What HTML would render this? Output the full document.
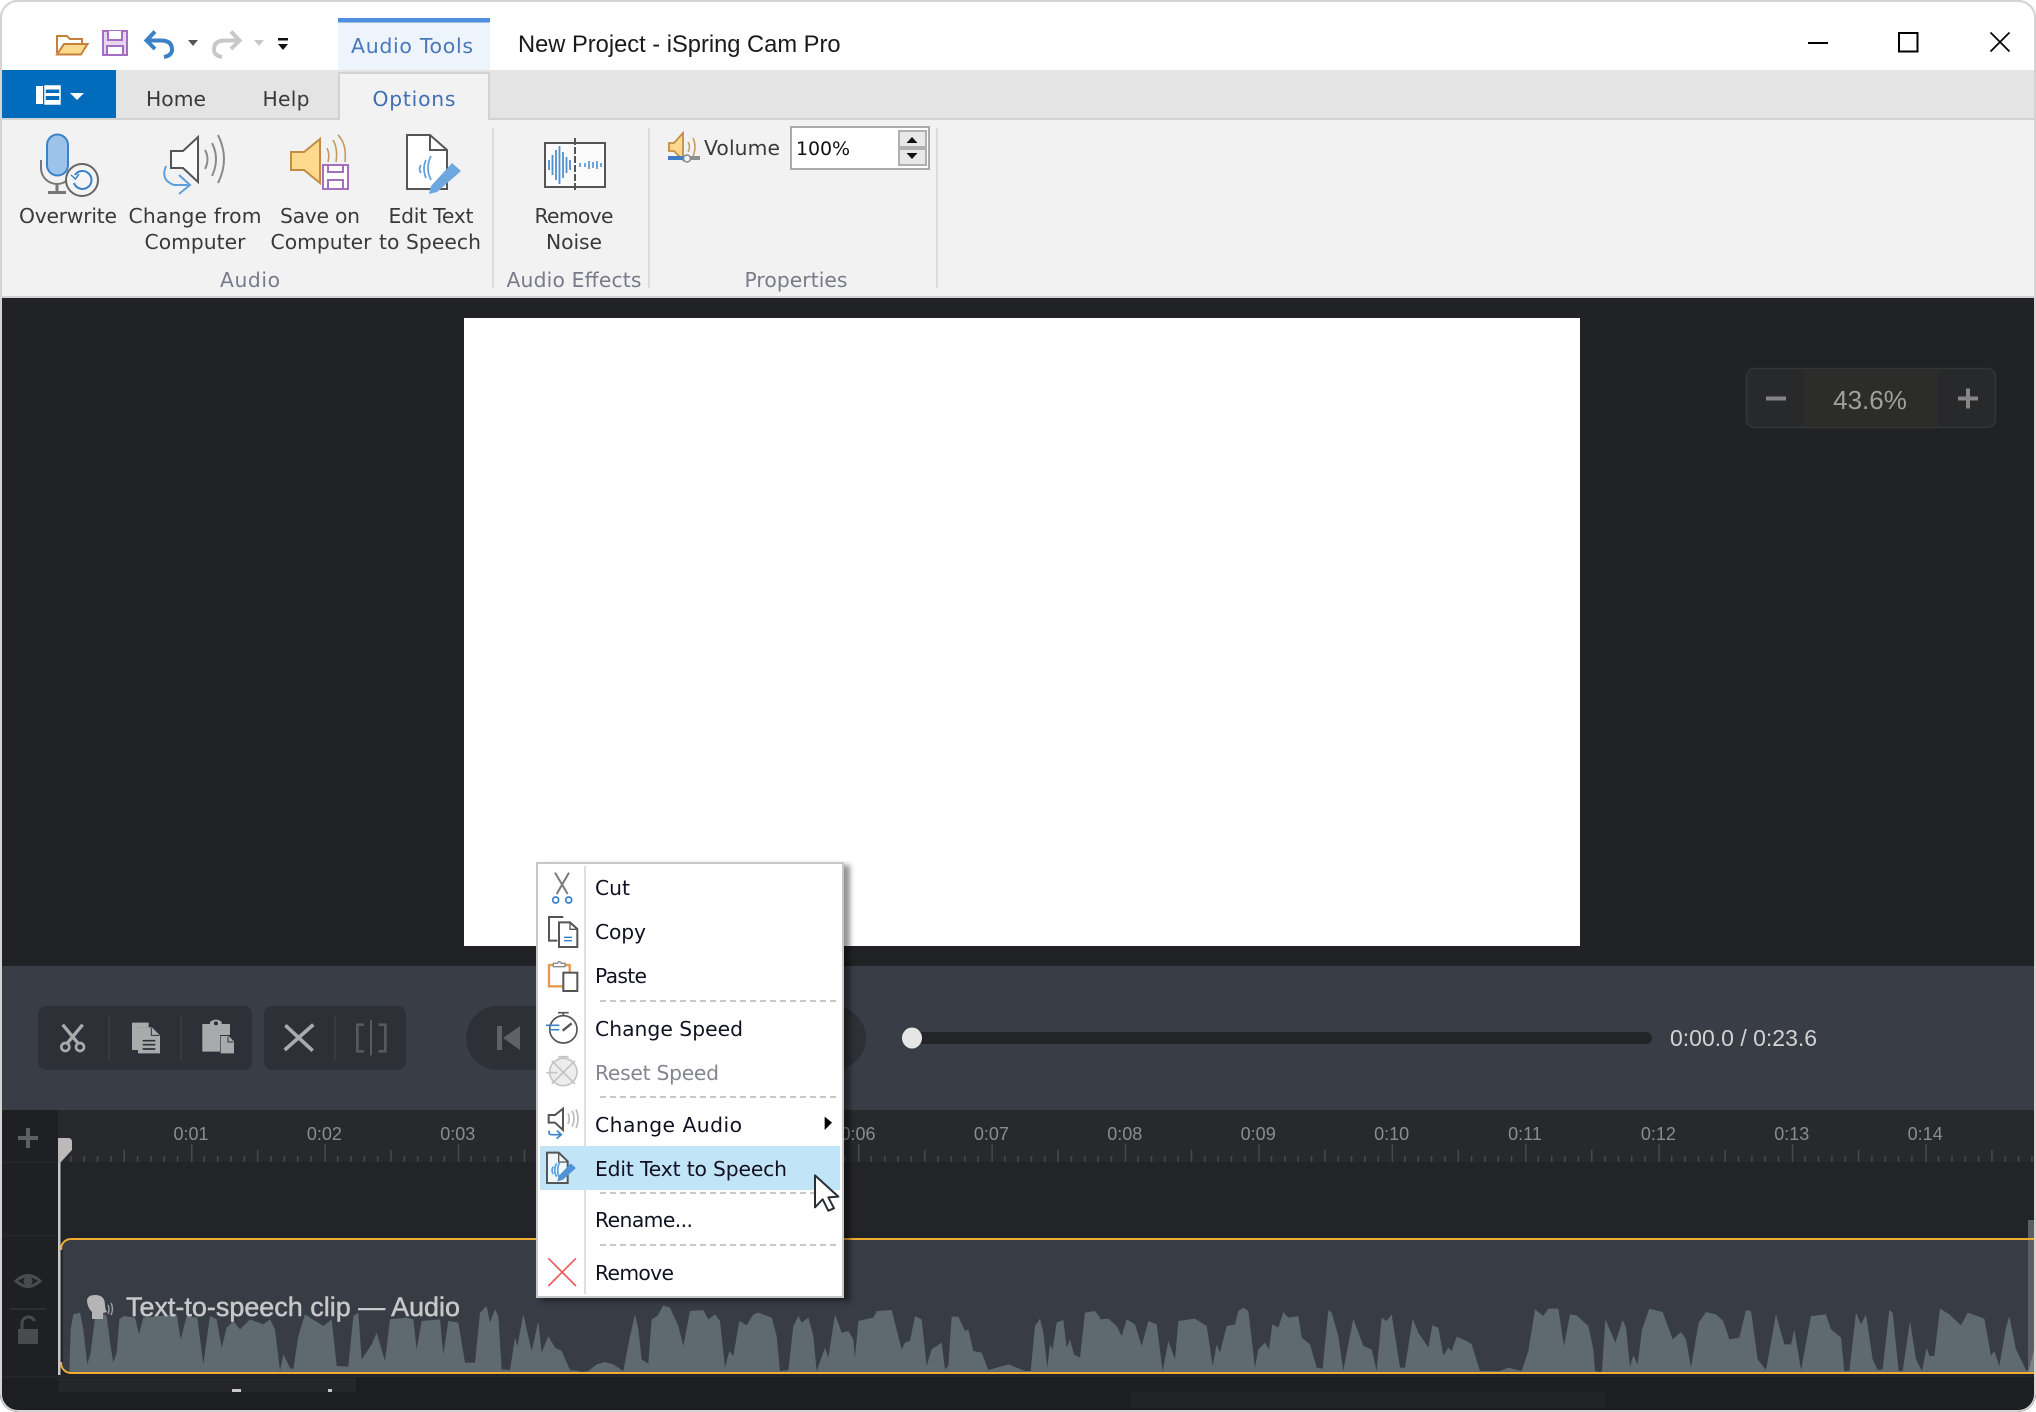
<!DOCTYPE html>
<html lang="en"><head><meta charset="utf-8"><title>New Project - iSpring Cam Pro</title>
<style>
html,body{margin:0;padding:0;background:#fff;width:2036px;height:1412px;overflow:hidden}
#win{position:absolute;left:0;top:0;width:2036px;height:1412px;border-radius:18px;overflow:hidden;background:#202226}
#win svg{position:absolute;left:0;top:0}
#frame{position:absolute;left:0;top:0;width:2032px;height:1408px;border:2px solid #d4d4d4;border-radius:18px;pointer-events:none}
#menu{position:absolute;left:536px;top:862px;width:304px;height:432px;background:#fff;border:2px solid #c6c6c6;box-shadow:6px 3px 5px rgba(0,0,0,.42)}
text{font-family:"DejaVu Sans","Liberation Sans",sans-serif;font-size:20.3px;fill:#3a3a3a}
.m{text-anchor:middle}
.l{font-family:"Liberation Sans",sans-serif}
.g{fill:#7a7a8a}
.mi{font-size:20.3px;fill:#111122}
.r{font-family:"Liberation Sans",sans-serif;font-size:18px;fill:#8c8c8c;text-anchor:middle}
</style></head><body>
<div id="win">
<svg width="2036" height="1412" viewBox="0 0 2036 1412">
<defs>
<pattern id="tk" patternUnits="userSpaceOnUse" x="57.6" y="1110" width="133.4" height="52">
<g stroke="#47494d" stroke-width="1.5">
<path d="M.7 34V52M13.3 46V52M26.7 46V52M40 46V52M53.4 46V52M66.7 40V52M80 46V52M93.4 46V52M106.7 46V52M120 46V52"/>
</g></pattern>
</defs>
<!-- title bar -->
<rect width="2036" height="70" fill="#fff"/>
<rect x="338" y="18" width="152" height="54" fill="#eef4fc"/>
<rect x="338" y="18" width="152" height="4.5" fill="#4f8ee0"/>
<text class="m" x="412" y="53" textLength="122" style="font-size:20.5px;fill:#4a78b8">Audio Tools</text>
<text class="l" x="518" y="52" style="font-size:23.7px;fill:#1a1a1a">New Project - iSpring Cam Pro</text>
<!-- quick access -->
<path d="M57 53V36h10l3 3h12v6" fill="#fff" stroke="#c5813c" stroke-width="2"/>
<path d="M57 54.5L64 44H87.5L81 54.5Z" fill="#fdd98e" stroke="#c5813c" stroke-width="2"/>
<rect x="103" y="31" width="24" height="24" fill="#e6d6f0" stroke="#a46fc2" stroke-width="2"/>
<path d="M108 31v9h14v-9M107 54v-8h16v8" fill="#fff" stroke="#a46fc2" stroke-width="2"/>
<path d="M155 31.5L146.5 40.5L155 49M147 40.5H161q11 0 11 9q0 6-8 7.5" fill="none" stroke="#3a82c8" stroke-width="4"/>
<path d="M188 40h10l-5 6z" fill="#555"/>
<path d="M231 31.5L239.5 40.5L231 49M239 40.5H225q-11 0-11 9q0 6 8 7.5" fill="none" stroke="#c8c8c8" stroke-width="4"/>
<path d="M254 40h10l-5 6z" fill="#c8c8c8"/>
<path d="M278 38h10v2.5h-10zM278 44h10l-5 6z" fill="#111"/>
<!-- window controls -->
<rect x="1808" y="42" width="20" height="2" fill="#000"/>
<rect x="1899" y="33" width="18.5" height="18.5" fill="none" stroke="#000" stroke-width="2"/>
<path d="M1990.5 32.5L2009.5 51.5M2009.5 32.5L1990.5 51.5" stroke="#000" stroke-width="1.7"/>
<!-- tab row -->
<rect y="70" width="2036" height="48" fill="#e4e4e4"/>
<rect y="118" width="2036" height="2" fill="#d2d2d2"/>
<rect x="2" y="70" width="114" height="48" fill="#006cbb"/>
<path d="M36 86h7v18h-7zM45 86h15v3.5H45zM45 93h15v3H45zM45 100h15v4H45z" fill="#fff"/>
<path d="M45 86h15v18H45z" fill="none" stroke="#fff" stroke-width="1.5"/>
<path d="M70 93h14l-7 7z" fill="#fff"/>
<text class="m" x="176" y="106">Home</text>
<text class="m" x="286" y="106" textLength="47">Help</text>
<path d="M339 120V73H489V120" fill="#f2f2f2" stroke="#d2d2d2" stroke-width="2"/>
<rect x="340" y="117" width="148" height="4" fill="#f2f2f2"/>
<text class="m" x="414" y="106" textLength="83" style="fill:#3f6fb5">Options</text>
<!-- ribbon -->
<rect y="120" width="2036" height="176" fill="#f2f2f2"/>
<rect y="296" width="2036" height="2" fill="#d2d2d2"/>
<path d="M493 128V288M649 128V288M937 128V288" stroke="#dcdcdc" stroke-width="2"/>
<!-- Overwrite icon -->
<path d="M41 160v8a16 16 0 0 0 32 0" fill="none" stroke="#777" stroke-width="2"/>
<path d="M57 184v8M48 192.5h18" stroke="#777" stroke-width="3"/>
<rect x="47" y="134.5" width="21" height="41" rx="10.5" fill="#9cc4ea" stroke="#3a82c8" stroke-width="2"/>
<circle cx="82" cy="180" r="16" fill="#f4f4f4" stroke="#666" stroke-width="2"/>
<path d="M75 175a9 9 0 1 1-1 8" fill="none" stroke="#3a82c8" stroke-width="2"/>
<path d="M71 175l4.5 4 3.5-5" fill="none" stroke="#3a82c8" stroke-width="1.5"/>
<!-- Change from icon -->
<path d="M171 151h12L198 137V182L183 168H171Z" fill="#fafafa" stroke="#555" stroke-width="2"/>
<path d="M205 150q5 9 0 19M212 143q8 16 0 33M218 135q12 24 0 48" fill="none" stroke="#8a8a8a" stroke-width="2"/>
<path d="M166 166q-6 14 8 19h14M179 175l11 10-11 9" fill="none" stroke="#5ca0dc" stroke-width="2"/>
<!-- Save icon -->
<path d="M291 152h13L320 139V183L304 170H291Z" fill="#fdd98e" stroke="#c48d45" stroke-width="2"/>
<path d="M328 162q2-8-1-14M336 162q2-14-3-22M345 162q2-18-7-27" fill="none" stroke="#c49a60" stroke-width="1.6"/>
<rect x="323" y="165" width="25" height="24" fill="#fff" stroke="#a46fc2" stroke-width="2"/>
<path d="M328 165v7h15v-7M328 189v-9h15v9" fill="none" stroke="#a46fc2" stroke-width="2"/>
<!-- Edit text icon -->
<path d="M407 135H430L447 150V189H407Z" fill="#fff" stroke="#555" stroke-width="2"/>
<path d="M430 135V150H447" fill="none" stroke="#555" stroke-width="2"/>
<path d="M421 165q-3 4 0 8M426 160q-4 8 0 18M431 156q-6 12 0 24" fill="none" stroke="#5ca0dc" stroke-width="1.7"/>
<path d="M452 163L461 171L437 192L429 194L431 186Z" fill="#6ea7e0"/>
<!-- Noise icon -->
<rect x="545" y="143" width="60" height="44" fill="#fbfbfb" stroke="#555" stroke-width="2"/>
<path d="M575 138V192" stroke="#555" stroke-width="2" stroke-dasharray="7 2"/>
<path d="M549 160v10M552.5 155v20M556 150v30M559.5 146v38M563 152v26M566.5 157v16M570 160v10" stroke="#4f90d0" stroke-width="1.8"/>
<path d="M580 163v4M585 163v4M589 161v8M593 162v6M597 161v8M601 163v4" stroke="#4f90d0" stroke-width="1.6"/>
<!-- ribbon labels -->
<text class="m" x="68" y="223" textLength="98">Overwrite</text>
<text class="m" x="195" y="223" textLength="133">Change from</text>
<text class="m" x="195" y="249" textLength="101">Computer</text>
<text class="m" x="320" y="223" textLength="80">Save on</text>
<text class="m" x="321" y="249" textLength="101">Computer</text>
<text class="m" x="431" y="223" textLength="85">Edit Text</text>
<text class="m" x="430" y="249" textLength="102">to Speech</text>
<text class="m" x="574" y="223" textLength="79">Remove</text>
<text class="m" x="574" y="249" textLength="56">Noise</text>
<text class="m g" x="250" y="287" textLength="60">Audio</text>
<text class="m g" x="574" y="287" textLength="135">Audio Effects</text>
<text class="m g" x="796" y="287" textLength="103">Properties</text>
<!-- Volume -->
<path d="M669 143h5l9-10v27l-9-9h-5Z" fill="#fdd98e" stroke="#c48d45" stroke-width="1.8"/>
<path d="M688 142q3 5 0 10M693 138q4 9 0 18" fill="none" stroke="#c49a60" stroke-width="1.5"/>
<rect x="668" y="156" width="18" height="4" fill="#3d7fc4"/>
<rect x="686" y="156" width="14" height="4" fill="#8e8e8e"/>
<circle cx="687" cy="158.5" r="3.5" fill="#f2f2f2" stroke="#888" stroke-width="1.5"/>
<text x="704" y="155" textLength="76">Volume</text>
<rect x="791" y="127" width="138" height="42" fill="#fff" stroke="#ababab" stroke-width="2"/>
<text x="796" y="155" textLength="54" style="font-size:19px;fill:#111">100%</text>
<rect x="899" y="131" width="27" height="16" fill="#e8e8e8" stroke="#b0b0b0" stroke-width="2"/>
<rect x="899" y="149" width="27" height="16" fill="#e8e8e8" stroke="#b0b0b0" stroke-width="2"/>
<path d="M906.5 143h11l-5.5-6zM906.5 153h11l-5.500 6z" fill="#111"/>
<!-- canvas -->
<rect x="464" y="318" width="1116" height="628" fill="#fff"/>
<!-- zoom box -->
<rect x="1746.5" y="368.5" width="249" height="59" rx="8" fill="#28292b" stroke="#333539" stroke-width="1.5"/>
<rect x="1804" y="369" width="134" height="58" fill="#2c2c2a"/>
<rect x="1766" y="396.5" width="20" height="4" fill="#858585"/>
<path d="M1958 396.5h8v-8h4v8h8v4h-8v8h-4v-8h-8z" fill="#858585"/>
<text class="l m" x="1870" y="409" style="font-size:26px;fill:#a0a0a0">43.6%</text>
<!-- toolbar -->
<rect y="966" width="2036" height="144" fill="#393e46"/>
<rect x="38" y="1006" width="214" height="64" rx="8" fill="#2d3137"/>
<rect x="264" y="1006" width="142" height="64" rx="8" fill="#2d3137"/>
<rect x="466" y="1006" width="400" height="64" rx="32" fill="#2d3137"/>
<path d="M109 1016v44M181 1016v44M335 1016v44" stroke="#3b3f45" stroke-width="1.5"/>
<g transform="translate(30,1000) scale(.33333)">
<g fill="none" stroke="#a9aaac">
<path d="M98 74L146 132M158 74L110 132" stroke-width="10"/>
<circle cx="106" cy="141" r="12" stroke-width="8"/><circle cx="150" cy="141" r="12" stroke-width="8"/>
</g>
<path d="M306 68h50v14H324v68H306z" fill="#a9aaac"/>
<path d="M324 82H366L390 106V160H324Z" fill="#a9aaac"/>
<path d="M364 84v22h24" fill="none" stroke="#2d3137" stroke-width="3"/>
<path d="M338 122h38M338 134h38M338 147h38" stroke="#2d3137" stroke-width="5"/>
<path d="M517 72H540V66Q558 52 575 66V72H600V105H570V155H517Z" fill="#a9aaac"/>
<circle cx="558" cy="70" r="6" fill="#2d3137"/>
<path d="M572 108H596L612 124V160H572Z" fill="#a9aaac"/>
<path d="M594 110v16h16" fill="none" stroke="#2d3137" stroke-width="3"/>
<path d="M766 76L848 152M850 74L764 150" stroke="#a9aaac" stroke-width="11"/>
<path d="M1002 74H982V154H1002M1046 74H1066V154H1046" fill="none" stroke="#565a5f" stroke-width="8"/>
<path d="M1023 60V166" stroke="#85888b" stroke-width="3"/>
</g>
<path d="M497 1026h5v24h-5zM520 1026v24l-17-12z" fill="#5e6165"/>
<rect x="909" y="1032" width="743" height="12" rx="6" fill="#222428"/>
<ellipse cx="912" cy="1038" rx="10" ry="10.5" fill="#e6e6e6"/>
<text class="l" x="1670" y="1046" style="font-size:23px;fill:#d2d2d2">0:00.0 / 0:23.6</text>
<!-- timeline -->
<rect y="1110" width="2036" height="302" fill="#1d1e21"/>
<rect x="58" y="1110" width="1978" height="52" fill="#27292d"/>
<rect x="58" y="1110" width="1978" height="52" fill="url(#tk)"/>
<rect x="58" y="1162" width="1978" height="74" fill="#222428"/>
<rect x="58" y="1236" width="1978" height="140" fill="#212327"/>
<rect x="2" y="1110" width="56" height="270" fill="#1e2024"/>
<path d="M2 1162.5H58M2 1235.5H58M2 1376.5H2036" stroke="#26282b" stroke-width="1.5"/>
<path d="M10 1309H46" stroke="#303236" stroke-width="1.5"/>
<path d="M18 1136h8v-8h4v8h8v4h-8v8h-4v-8h-8z" fill="#5d5f62"/>
<path d="M16 1281q12-11 24 0q-12 11-24 0z" fill="none" stroke="#484a4e" stroke-width="3"/>
<circle cx="28" cy="1281" r="4.5" fill="#484a4e"/>
<path d="M18 1329h20v15H18z" fill="#484a4e"/>
<path d="M22 1329v-6a6.5 6.5 0 0 1 12.5-2" fill="none" stroke="#484a4e" stroke-width="3"/>
<rect x="58" y="1378" width="298" height="14" fill="#24262a"/>
<rect x="1130" y="1392" width="475" height="16" fill="#212327"/>
<path d="M232 1389h9v3h-9zM328 1389h4v3h-4z" fill="#c8c8c8"/>
<text class="r" x="191" y="1140">0:01</text>
<text class="r" x="324.4" y="1140">0:02</text>
<text class="r" x="457.8" y="1140">0:03</text>
<text class="r" x="858" y="1140">0:06</text>
<text class="r" x="991.4" y="1140">0:07</text>
<text class="r" x="1124.8" y="1140">0:08</text>
<text class="r" x="1258.2" y="1140">0:09</text>
<text class="r" x="1391.6" y="1140">0:10</text>
<text class="r" x="1525" y="1140">0:11</text>
<text class="r" x="1658.4" y="1140">0:12</text>
<text class="r" x="1791.8" y="1140">0:13</text>
<text class="r" x="1925.2" y="1140">0:14</text>
<!-- clip -->
<rect x="60" y="1239" width="2000" height="134" rx="10" fill="#383c44"/>
<rect x="2028" y="1220" width="6" height="153" fill="#5c5f62"/>
<path d="M2034 1350v23h-6z" fill="#7c8488"/>
<g fill="#5e6a6f">
<g transform="translate(60,1296) scale(.33333)"><polygon points="28,228 32,100 40,55 60,50 70,100 82,205 92,170 105,65 125,50 140,60 150,140 160,200 170,170 178,70 190,60 225,65 237,115 250,65 350,55 362,130 380,60 412,65 430,205 440,130 450,60 470,70 485,155 500,95 520,75 540,100 570,70 610,85 630,70 645,100 660,225 670,175 690,215 700,220 715,120 735,55 790,90 815,70 830,210 865,212 880,60 895,50 905,190 935,145 950,110 975,195 990,70 1040,65 1060,70 1070,160 1085,75 1140,70 1150,175 1165,75 1195,80 1215,200 1245,200 1260,50 1280,30 1290,80 1305,40 1315,60 1325,220 1350,222 1365,125 1372,150 1390,55 1415,165 1435,75 1445,170 1465,120 1485,155 1505,165 1530,222 1560,225 1560,228"/></g>
<g transform="translate(580,1296) scale(.33333)"><polygon points="0,228 25,225 50,205 75,198 100,205 130,225 150,120 165,55 175,100 185,190 205,203 215,70 232,60 250,28 270,35 295,90 310,150 330,45 370,42 385,70 405,55 420,75 435,215 448,165 460,180 478,75 500,88 520,55 535,50 575,65 590,120 600,225 625,222 640,90 655,60 665,80 685,65 700,120 710,225 735,155 745,185 765,55 785,110 805,105 820,130 825,185 835,75 880,65 890,45 935,42 965,160 975,140 990,135 1005,60 1025,70 1040,210 1055,160 1085,140 1095,220 1105,210 1115,62 1135,62 1155,105 1165,100 1180,165 1205,170 1225,222 1285,205 1335,225 1352,225 1365,90 1380,68 1390,110 1402,215 1410,145 1418,160 1430,80 1450,72 1460,155 1470,130 1482,175 1500,185 1515,50 1545,45 1560,65 1560,228"/></g>
<g transform="translate(1100,1296) scale(.33333)"><polygon points="0,228 0,70 25,68 50,90 65,120 80,70 105,85 125,150 145,75 170,85 188,225 205,135 225,190 235,75 285,68 320,90 338,210 350,145 360,170 380,90 405,85 415,45 430,35 445,45 465,215 475,160 495,140 507,160 517,85 535,95 550,48 565,65 595,60 605,125 630,145 650,215 668,218 685,42 695,50 715,120 730,225 740,170 760,68 790,150 815,160 830,225 845,65 860,75 875,55 900,215 915,215 938,68 955,110 985,155 997,88 1015,95 1030,178 1045,155 1055,165 1070,122 1100,135 1115,145 1140,225 1200,225 1225,215 1265,225 1285,165 1305,40 1330,60 1345,38 1375,38 1392,150 1410,55 1430,58 1465,90 1480,160 1485,225 1500,228"/></g>
<g transform="translate(1516,1296) scale(.33333)"><polygon points="252,228 258,225 268,70 298,140 320,72 330,95 342,212 352,178 365,205 378,100 400,38 440,48 470,130 495,108 510,130 525,215 548,80 570,48 600,55 622,75 640,130 670,125 690,42 705,45 725,190 750,222 780,55 805,145 825,145 835,100 855,222 885,60 930,55 945,100 975,125 985,225 1000,225 1020,50 1035,85 1050,55 1070,190 1085,222 1100,220 1120,42 1130,50 1148,225 1160,225 1182,75 1200,190 1218,225 1232,155 1240,180 1255,180 1272,38 1300,55 1335,88 1355,50 1405,68 1425,180 1435,165 1450,210 1470,95 1480,60 1500,160 1530,222 1536,225 1536,228"/></g>
</g>
<rect x="61" y="1239" width="2000" height="134" rx="10" fill="none" stroke="#f0ad32" stroke-width="2"/>
<rect x="60" y="1250" width="3" height="112" fill="#25272b"/>
<path d="M87 1300q1-5 8-5q10 0 10 10q0 4 2 7l-4 1v6h-11v-7q-5-5-5-12z" fill="#b5b5b5"/>
<path d="M108 1305q2 4 0 9M111 1303q3 6 0 12" fill="none" stroke="#9a9a9a" stroke-width="1.5"/>
<text class="l" x="126" y="1316" textLength="334" style="font-size:26.9px;fill:#c6c8ca;stroke:#c6c8ca;stroke-width:.5px">Text-to-speech clip — Audio</text>
<!-- playhead -->
<rect x="58" y="1162" width="2.5" height="213" fill="#c8c8c8"/>
<path d="M58 1138H68Q72 1138 72 1142V1150L60 1163H58Z" fill="#bdb9b8"/>
</svg>
<div id="menu"></div>
<svg width="2036" height="1412" viewBox="0 0 2036 1412">
<rect x="540" y="1146" width="300" height="44" fill="#c1e4f7"/>
<path d="M585 866V1146M585 1190V1294" stroke="#dfdfe2" stroke-width="2"/>
<path d="M600 1001H836M600 1097H836M600 1193H836M600 1245H836" stroke="#c8c8c8" stroke-width="2" stroke-dasharray="6 4"/>
<g transform="translate(520,850) scale(.33333)">
<path d="M105 68L143 132M147 68L110 132" stroke="#7a7a7a" stroke-width="6" fill="none"/>
<circle cx="107" cy="150" r="9" fill="none" stroke="#3a82c8" stroke-width="5"/><circle cx="146" cy="150" r="9" fill="none" stroke="#3a82c8" stroke-width="5"/>
<path d="M130 201H87V272H112" fill="none" stroke="#555" stroke-width="6"/>
<path d="M117 217H150L172 237V291H117Z" fill="#fff" stroke="#555" stroke-width="6"/>
<path d="M150 217V238H172" fill="none" stroke="#555" stroke-width="4"/>
<path d="M132 262H156M132 272H156" stroke="#3a82c8" stroke-width="4"/>
<rect x="87" y="345" width="62" height="64" fill="#fff" stroke="#e89a4c" stroke-width="7"/>
<path d="M100 350V340H112Q118 330 124 340H135V350Z" fill="#fff" stroke="#888" stroke-width="4"/>
<rect x="130" y="368" width="42" height="55" fill="#fff" stroke="#555" stroke-width="6"/>
<circle cx="130" cy="538" r="41" fill="#fff" stroke="#555" stroke-width="5"/>
<path d="M130 497V486M114 488H146" stroke="#555" stroke-width="5"/>
<path d="M128 542L155 520" stroke="#555" stroke-width="7"/>
<path d="M78 526H118M88 539H118" stroke="#3a82c8" stroke-width="5"/>
<circle cx="130" cy="666" r="41" fill="#ededed" stroke="#c4c4c4" stroke-width="5"/>
<path d="M130 627V618M114 620H146M95 632L165 702M165 632L95 702M78 668H112" stroke="#c4c4c4" stroke-width="5"/>
</g>
<g transform="translate(520,1100) scale(.33333)">
<path d="M86 45H105L129 26V90L105 68H86Z" fill="#fff" stroke="#555" stroke-width="6"/>
<path d="M144 40q7 16 0 32M156 32q12 24 0 48M168 28q12 30 0 56" fill="none" stroke="#bbb" stroke-width="5"/>
<path d="M88 92q-4 12 8 12H124M110 92L124 104L110 116" fill="none" stroke="#3a82c8" stroke-width="5"/>
<path d="M81 158H116L143 184V249H81Z" fill="#f0f7fb" stroke="#555" stroke-width="6"/>
<path d="M116 158V186H143" fill="none" stroke="#555" stroke-width="4"/>
<path d="M100 200q-8 10 0 22M110 190q-12 20 0 40M120 186q-14 24 0 50" fill="none" stroke="#5ca0dc" stroke-width="5"/>
<path d="M152 190L168 204L128 240L112 244L116 228Z" fill="#4f94d8"/>
<path d="M85 475L168 558M168 475L85 558" stroke="#e85c5c" stroke-width="5"/>
<path d="M914 50L936 68L914 90Z" fill="#000"/>
</g>
<text class="mi" x="595" y="895" textLength="35">Cut</text>
<text class="mi" x="595" y="939" textLength="51">Copy</text>
<text class="mi" x="595" y="983" textLength="52">Paste</text>
<text class="mi" x="595" y="1036" textLength="148">Change Speed</text>
<text class="mi" x="595" y="1080" textLength="124" style="fill:#85858f">Reset Speed</text>
<text class="mi" x="595" y="1132" textLength="147">Change Audio</text>
<text class="mi" x="595" y="1176" textLength="192">Edit Text to Speech</text>
<text class="mi" x="595" y="1227" textLength="98">Rename...</text>
<text class="mi" x="595" y="1280" textLength="79">Remove</text>
<g transform="translate(520,1100) scale(.33333)">
<path d="M885 226V322L908 298L925 332L942 325L925 292L955 290Z" fill="#fff" stroke="#2a2f36" stroke-width="6" stroke-linejoin="round"/>
</g>
</svg>
<div id="frame"></div>
</div>
</body></html>
